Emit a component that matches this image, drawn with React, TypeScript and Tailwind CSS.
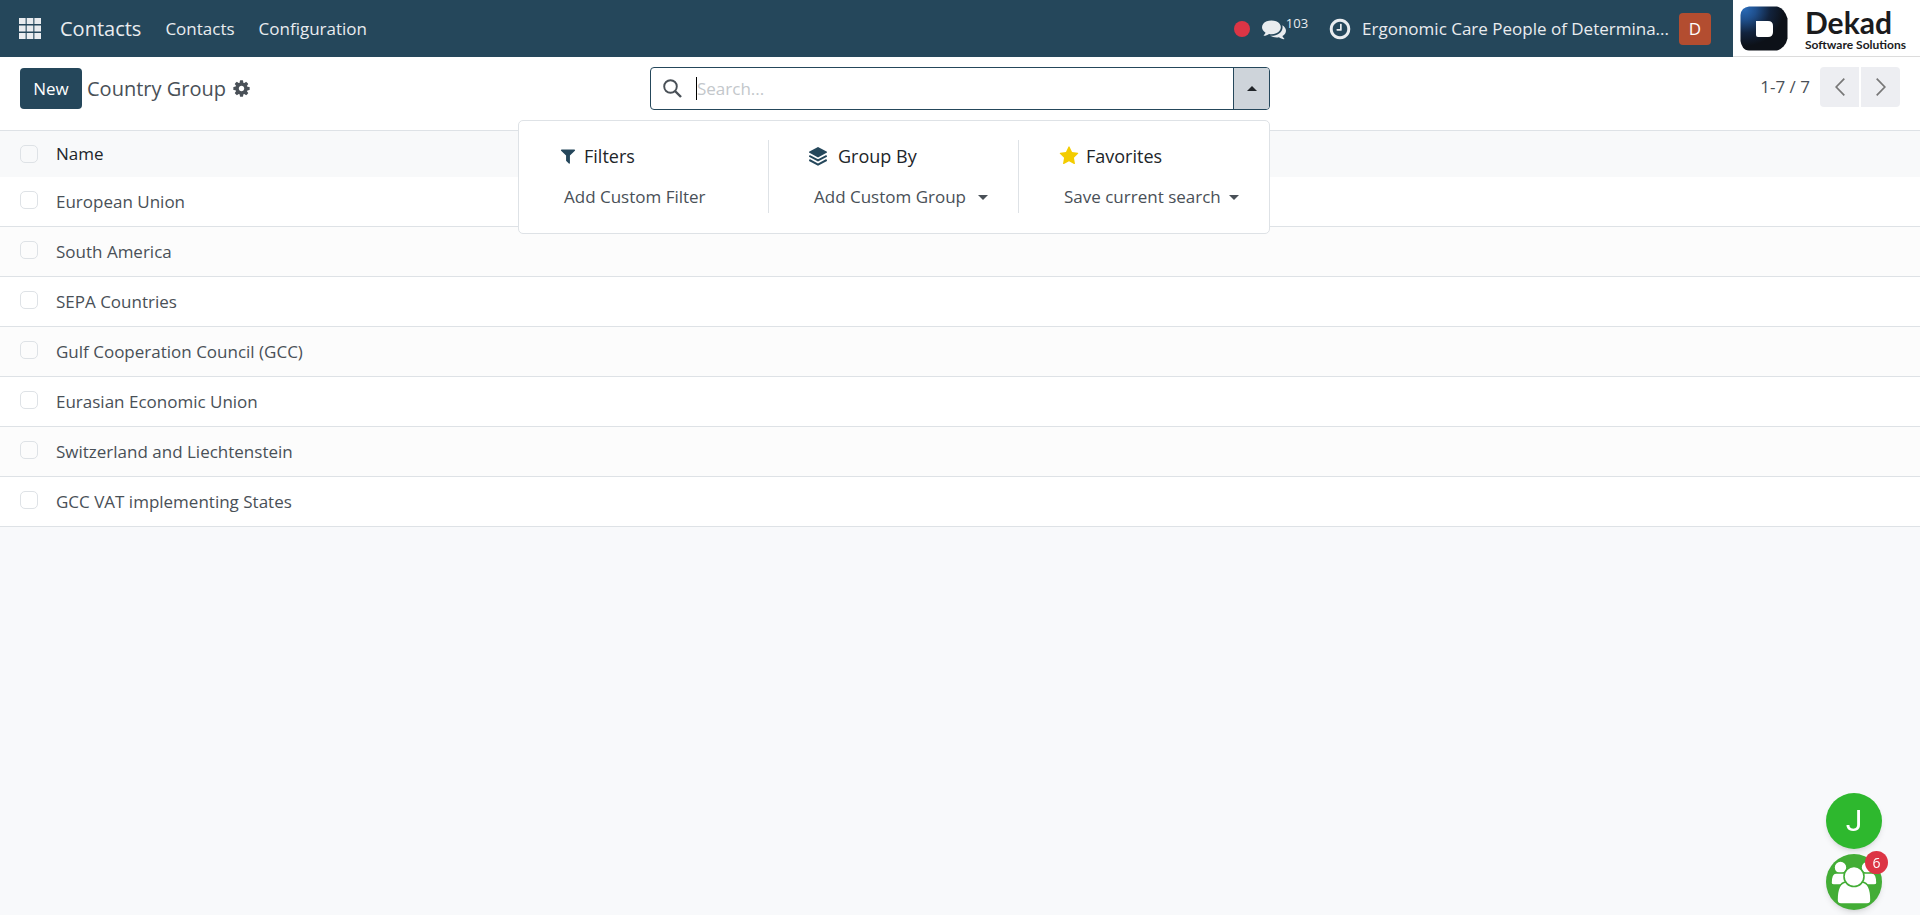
import { useState } from 'react';

const SANS = "font-['Open_Sans','Noto_Sans',sans-serif]";

const PATHS = {
  cog: 'M1152 896q0-106-75-181t-181-75-181 75-75 181 75 181 181 75 181-75 75-181zm512-109v222q0 12-8 23t-20 13l-185 28q-19 54-39 91 35 50 107 138 10 12 10 25t-9 23q-27 37-99 108t-94 71q-12 0-26-9l-138-108q-44 23-91 38-16 136-29 186-7 28-36 28h-222q-14 0-24.500-8.500t-11.500-21.500l-28-184q-49-16-90-37l-141 107q-10 9-25 9-14 0-25-11-126-114-165-168-7-10-7-23 0-12 8-23 15-21 51-66.500t54-70.500q-27-50-41-99l-183-27q-13-2-21-12.500t-8-23.500v-222q0-12 8-23t19-13l186-28q14-46 39-92-40-57-107-138-10-12-10-24 0-10 9-23 26-36 98.500-107.500t94.500-71.500q13 0 26 10l138 107q44-23 91-38 16-136 29-186 7-28 36-28h222q14 0 24.500 8.500t11.500 21.500l28 184q49 16 90 37l142-107q9-9 24-9 13 0 25 10 129 119 165 170 7 8 7 22 0 12-8 23-15 21-51 66.500t-54 70.500q26 50 41 98l183 28q13 2 21 12.500t8 23.500z',
  comments:
    'M1408 768q0 139-94 257t-256.500 186.500-353.500 68.500q-86 0-176-16-124 88-278 128-36 9-86 16h-3q-11 0-20.500-8t-11.500-21q-1-3-1-6.500t.5-6.500 2-6l2.500-5 3.500-5.500 4-5 4.500-5 4-4.500q5-6 23-25t26-29.500 22.500-29 25-38.500 20.500-44q-124-72-195-177t-71-224q0-139 94-257t256.500-186.500 353.500-68.500 353.500 68.500 256.500 186.500 94 257zm384 256q0 120-71 224.500t-195 176.500q10 24 20.500 44t25 38.500 22.500 29 26 29.500 23 25q1 1 4 4.500t4.500 5 4 5 3.500 5.500l2.500 5 2 6 .5 6.500-1 6.500q-3 14-13 22t-22 7q-50-7-86-16-154-40-278-128-90 16-176 16-271 0-472-132 58 4 88 4 161 0 309-45t264-129q125-92 192-212t67-254q0-77-23-152 129 71 204 178t75 230z',
  clock:
    'M1024 544v448q0 14-9 23t-23 9h-320q-14 0-23-9t-9-23v-64q0-14 9-23t23-9h224v-352q0-14 9-23t23-9h64q14 0 23 9t9 23zm416 352q0-148-73-273t-198-198-273-73-273 73-198 198-73 273 73 273 198 198 273 73 273-73 198-198 73-273zm224 0q0 209-103 385.500t-279.500 279.500-385.500 103-385.500-103-279.500-279.500-103-385.500 103-385.500 279.500-279.500 385.500-103 385.500 103 279.500 279.500 103 385.500z',
  filter:
    'M1595 295q17 41-14 70l-493 493v742q0 42-39 59-13 5-25 5-27 0-45-19l-256-256q-19-19-19-45v-486l-493-493q-31-29-14-70 17-39 59-39h1280q42 0 59 39z',
  star: 'M1728 647q0 22-26 48l-363 354 86 500q1 7 1 20 0 21-10.500 35.500t-30.500 14.500q-19 0-40-12l-449-236-449 236q-22 12-40 12-21 0-31.500-14.500t-10.500-35.500q0-6 2-20l86-500-364-354q-25-27-25-48 0-37 56-46l502-73 225-455q19-41 49-41t49 41l225 455 502 73q56 9 56 46z',
};

function Glyph({ name, className }: { name: keyof typeof PATHS; className: string }) {
  return (
    <svg viewBox="0 0 1792 1792" fill="currentColor" aria-hidden="true" className={`shrink-0 ${className}`}>
      <path d={PATHS[name]} />
    </svg>
  );
}

function LayersIcon() {
  return (
    <svg viewBox="0 0 18 19" aria-hidden="true" className="h-[19px] w-[18px] shrink-0">
      <path d="M9 0 18 4.800v.8L9 10.400 0 5.600v-.8Z" fill="currentColor" />
      <path d="M.3 8.800 9 13.400l8.700-4.600M.3 13 9 17.600l8.700-4.600" fill="none" stroke="currentColor" strokeWidth="2" />
    </svg>
  );
}

function Caret({ up = false }: { up?: boolean }) {
  return (
    <svg viewBox="0 0 10 5" aria-hidden="true" className="h-[5px] w-[10px] shrink-0">
      <path d={up ? 'M0 5 5 0l5 5Z' : 'M0 0h10L5 5Z'} fill="currentColor" />
    </svg>
  );
}

function DekadLogo() {
  return (
    <div className="flex h-[57px] w-[187px] shrink-0 items-start border-b border-[#dcdcdc] bg-white pt-[6px] pl-[7px]">
      <svg viewBox="0 0 48 45" aria-hidden="true" className="h-[45px] w-12 shrink-0">
        <defs>
          <radialGradient id="dekad-mark" cx="0.08" cy="0.05" r="0.85">
            <stop offset="0" stopColor="#2a6bb8" />
            <stop offset="0.3" stopColor="#1f4f8c" />
            <stop offset="0.65" stopColor="#12233d" />
            <stop offset="1" stopColor="#0d1118" />
          </radialGradient>
        </defs>
        <path d="M9 .500h28q4 1 6.500 4t4 8v20q-1 5-4 8t-6.500 4H9q-4 0-6-3T.5 35V9q.5-4 2.500-6T9 .500Z" fill="url(#dekad-mark)" />
        <path d="M16 15h12q5 0 5 5v6q0 5-5 5H18q-2 0-2-2Z" fill="#fff" />
      </svg>
      <div className="ml-[17px] flex flex-col font-['Lato','Noto_Sans',sans-serif] text-[#1b1b1d]">
        <span className="text-3xl leading-8 font-bold">Dekad</span>
        <span className="text-xs leading-[13px] font-bold whitespace-nowrap">Software Solutions</span>
      </div>
    </div>
  );
}

function Navbar() {
  return (
    <header className="flex h-[57px] items-center bg-[#25475b] text-[#e9ecef]">
      <button type="button" aria-label="Home menu" className="ml-[19px] shrink-0">
        <svg viewBox="0 0 22 21" aria-hidden="true" className="h-[21px] w-[22px]">
          {[0, 7.700, 15.400].map((x) =>
            [0, 7.500, 15].map((y) => <rect key={`${x}-${y}`} x={x} y={y} width="6.600" height="6" fill="currentColor" />),
          )}
        </svg>
      </button>
      <nav className="flex items-center">
        <a href="#home" className="ml-[19px] text-xl">Contacts</a>
        <a href="#contacts" className="ml-6 text-[17px]">Contacts</a>
        <a href="#configuration" className="ml-6 text-[17px]">Configuration</a>
      </nav>
      <div className="ml-auto flex items-center">
        <span className="size-4 rounded-full bg-[#dc3545]" />
        <button type="button" aria-label="Messages" className="ml-3 flex items-center">
          <Glyph name="comments" className="size-6" />
          <span className="-mt-3 text-[13px] leading-5">103</span>
        </button>
        <button type="button" aria-label="Activities" className="ml-5">
          <Glyph name="clock" className="size-6" />
        </button>
        <button type="button" className="ml-[10px] text-left text-[17px] whitespace-nowrap">
          Ergonomic Care People of Determina...
        </button>
        <button type="button" aria-label="User menu" className="ml-[10px] size-8 rounded-sm bg-[#b34d30] text-[17px] text-white">
          D
        </button>
        <span className="w-[22px]" />
        <DekadLogo />
      </div>
    </header>
  );
}

function SearchMenu() {
  return (
    <div className="absolute top-[120px] left-1/2 z-10 ml-[-442px] grid w-[752px] grid-cols-3 rounded-[5px] border border-[#dee2e6] bg-white pt-[19px] pb-5">
      <section className="flex h-[73px] flex-col border-r border-[#dee2e6] pl-10">
        <h2 className="flex h-8 items-center gap-[7px] text-lg text-[#212529]">
          <Glyph name="filter" className="size-[18px] text-[#25475b]" />
          Filters
        </h2>
        <button type="button" className="mt-[9px] flex h-8 items-center pl-[5px] text-[17px]">Add Custom Filter</button>
      </section>
      <section className="flex h-[73px] flex-col border-r border-[#dee2e6] pl-10">
        <h2 className="flex h-8 items-center gap-[11px] text-lg text-[#212529]">
          <span className="text-[#25475b]"><LayersIcon /></span>
          Group By
        </h2>
        <button type="button" className="mt-[9px] flex h-8 items-center justify-between pr-[30px] pl-[5px] text-[17px]">
          Add Custom Group <Caret />
        </button>
      </section>
      <section className="flex h-[73px] flex-col pl-10">
        <h2 className="flex h-8 items-center gap-[7px] text-lg text-[#212529]">
          <Glyph name="star" className="size-5 text-[#f3cc00]" />
          Favorites
        </h2>
        <button type="button" className="mt-[9px] flex h-8 items-center justify-between pr-[30px] pl-[5px] text-[17px]">
          Save current search <Caret />
        </button>
      </section>
    </div>
  );
}

function ControlPanel() {
  return (
    <div className="grid h-[74px] grid-cols-[1fr_620px_1fr] items-start border-b border-[#dee2e6] bg-white px-5 pt-[10px]">
      <div className="flex items-center pt-px">
        <button type="button" className="h-[41px] w-[62px] rounded-[4px] bg-[#25475b] text-[17px] text-white">New</button>
        <h1 className="ml-[5px] text-xl">Country Group</h1>
        <button type="button" aria-label="Actions" className="ml-[6px]">
          <Glyph name="cog" className="size-[19px]" />
        </button>
      </div>
      <div className="flex h-[43px] rounded-[4px] border border-[#25475b]">
        <label htmlFor="search" className="flex w-[45px] items-center pl-3" aria-label="Search">
          <svg viewBox="0 0 19 19" aria-hidden="true" className="size-[19px]" fill="none" stroke="currentColor">
            <circle cx="7.500" cy="7.500" r="6.300" strokeWidth="1.900" />
            <path d="m12 12 6 6" strokeWidth="2.400" />
          </svg>
        </label>
        <span className="h-[23px] w-px self-center bg-black" />
        <input
          id="search"
          type="text"
          placeholder="Search..."
          className="min-w-0 flex-1 bg-transparent text-[17px] outline-none placeholder:text-[#c3c7cb]"
        />
        <button
          type="button"
          aria-label="Toggle search panel"
          className="flex w-9 items-center justify-center rounded-r-[3px] border-l border-[#25475b] bg-[#ced4da] text-[#212529]"
        >
          <Caret up />
        </button>
      </div>
      <div className="flex items-center justify-end">
        <span className="mr-[10px] text-[17px]">1-7 / 7</span>
        <div className="flex gap-[2px] text-[#777]">
          <button type="button" aria-label="Previous" className="flex h-10 w-[39px] items-center justify-center rounded-l-[4px] bg-[#edeef2]">
            <svg viewBox="0 0 10 18" aria-hidden="true" className="h-[18px] w-[10px]" fill="none" stroke="currentColor" strokeWidth="1.700">
              <path d="M9.300.7 1.200 9l8.100 8.300" />
            </svg>
          </button>
          <button type="button" aria-label="Next" className="flex h-10 w-[39px] items-center justify-center rounded-r-[4px] bg-[#edeef2]">
            <svg viewBox="0 0 10 18" aria-hidden="true" className="h-[18px] w-[10px]" fill="none" stroke="currentColor" strokeWidth="1.700">
              <path d="M.7.700 8.800 9 .7 17.300" />
            </svg>
          </button>
        </div>
      </div>
    </div>
  );
}

const GROUPS = [
  'European Union',
  'South America',
  'SEPA Countries',
  'Gulf Cooperation Council (GCC)',
  'Eurasian Economic Union',
  'Switzerland and Liechtenstein',
  'GCC VAT implementing States',
];

const CHECKBOX =
  'block size-[18px] appearance-none rounded-[5px] border border-[#dee2e6] bg-transparent checked:bg-[#25475b]';

function GroupTable() {
  const [selected, setSelected] = useState<string[]>([]);
  const toggle = (name: string) =>
    setSelected((prev) => (prev.includes(name) ? prev.filter((n) => n !== name) : [...prev, name]));
  const all = selected.length === GROUPS.length;

  return (
    <table className="w-full border-separate border-spacing-0 text-left text-[17px]">
      <thead>
        <tr className="h-[46px] bg-[#f8f9fa]">
          <th className="w-14 p-0 pl-5">
            <input
              type="checkbox"
              aria-label="Select all"
              checked={all}
              onChange={() => setSelected(all ? [] : GROUPS)}
              className={CHECKBOX}
            />
          </th>
          <th className="p-0 font-normal text-[#212529]">Name</th>
        </tr>
      </thead>
      <tbody>
        {GROUPS.map((name) => (
          <tr key={name} className="h-[50px] bg-white even:bg-[#fcfcfc]">
            <td className="border-b border-[#dee2e6] p-0 pb-[3px] pl-5">
              <input
                type="checkbox"
                aria-label={name}
                checked={selected.includes(name)}
                onChange={() => toggle(name)}
                className={CHECKBOX}
              />
            </td>
            <td className="border-b border-[#dee2e6] p-0">{name}</td>
          </tr>
        ))}
      </tbody>
    </table>
  );
}

function ChatBubbles() {
  return (
    <div className="fixed right-[38px] bottom-[5px] flex flex-col gap-[5px]">
      <button type="button" aria-label="Chat with J" className="size-14 rounded-full bg-[#2eb82e] font-['Roboto',sans-serif] text-3xl leading-none text-white shadow-md">
        J
      </button>
      <button type="button" aria-label="Group chat" className="relative size-14 rounded-full bg-[#43ad36] shadow-md">
        <svg viewBox="0 0 56 56" aria-hidden="true" className="size-14" fill="#fff" stroke="#43ad36" strokeWidth="1.600">
          <circle cx="14.500" cy="13.500" r="6.500" />
          <circle cx="41.500" cy="13.500" r="6.500" />
          <path d="M5 29q0-10 5-10h9q6 2 6 12H8q-3 0-3-2ZM51 29q0-10-5-10h-9q-6 2-6 12h17q3 0 3-2Z" />
          <path d="M11 46q0-17 9-18h16q9 1 9 18 0 4-4 4H15q-4 0-4-4Z" />
          <circle cx="28" cy="22.500" r="10" />
        </svg>
        <span className="absolute -top-[3px] -right-[6px] flex size-[23px] items-center justify-center rounded-full bg-[#dc3545] text-sm text-white">
          6
        </span>
      </button>
    </div>
  );
}

export default function App() {
  return (
    <div className={`relative min-h-screen bg-[#f8f9fb] text-[#495057] ${SANS}`}>
      <Navbar />
      <ControlPanel />
      <SearchMenu />
      <GroupTable />
      <ChatBubbles />
    </div>
  );
}
